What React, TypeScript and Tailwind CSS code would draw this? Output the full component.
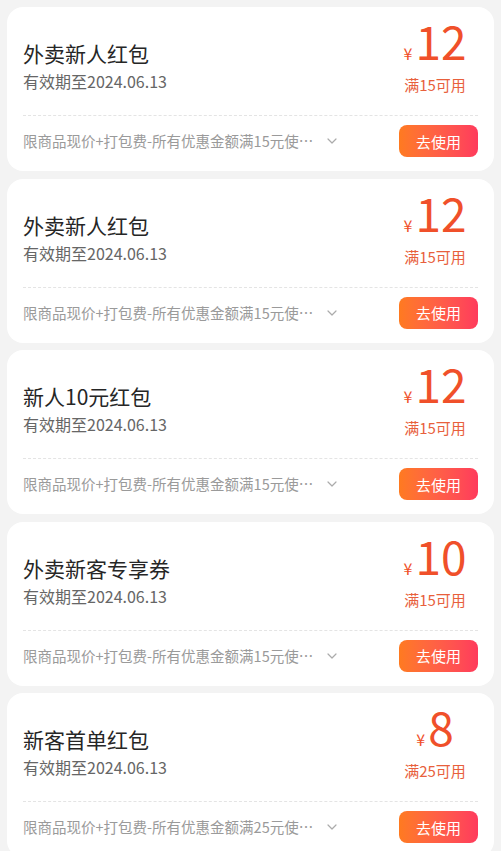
const coupons = [
  { id: 1, title: '外卖新人红包', amount: 12, min: 15 },
  { id: 2, title: '外卖新人红包', amount: 12, min: 15 },
  { id: 3, title: '新人10元红包', amount: 12, min: 15 },
  { id: 4, title: '外卖新客专享券', amount: 10, min: 15 },
  { id: 5, title: '新客首单红包', amount: 8, min: 25 },
];

function Chevron() {
  return (
    <svg width="10" height="6" viewBox="0 0 10 6" fill="none" className="shrink-0">
      <path d="M1 1l4 4 4-4" stroke="#ababab" strokeWidth="1.2" strokeLinecap="round" strokeLinejoin="round" />
    </svg>
  );
}

export default function App() {
  return (
    <div
      className="min-h-screen bg-[#f3f3f3] px-[7px] pt-[7px] pb-4 flex flex-col gap-[7.5px]"
      style={{ fontFamily: '"Noto Sans CJK SC", "Noto Sans", sans-serif' }}
    >
      {coupons.map((c) => (
        <div key={c.id} className="bg-white rounded-2xl px-4 h-[164px] flex flex-col shrink-0">
          <div className="h-[108px] flex justify-between">
            <div className="pt-[32px]">
              <div className="text-[21px] leading-7 text-[#262626]">{c.title}</div>
              <div className="mt-[3px] text-[16px] leading-[22px] text-[#666]">有效期至2024.06.13</div>
            </div>
            <div className="w-20 mr-[3px] pt-[10px] flex flex-col items-center">
              <div className="flex items-baseline text-[#f0502a]">
                <span className="text-[16px] leading-none mr-[3px]">¥</span>
                <span className="text-[46px] leading-[46px]">{c.amount}</span>
              </div>
              <div className="mt-[12px] text-[15px] leading-5 text-[#e8603c] whitespace-nowrap">满{c.min}可用</div>
            </div>
          </div>
          <div className="border-t border-dashed border-[#e4e4e4]" />
          <div className="flex-1 flex items-center justify-between pb-[5px]">
            <div className="flex items-center gap-[9px]">
              <div className="w-[295px] truncate text-[14.5px] leading-5 text-[#9a9a9a]">
                限商品现价+打包费-所有优惠金额满{c.min}元使用，每单限用一张
              </div>
              <Chevron />
            </div>
            <button className="w-[79px] h-[32px] rounded-lg bg-gradient-to-r from-[#ff7a1f] to-[#ff3a5c] text-white text-[15px] leading-none">
              去使用
            </button>
          </div>
        </div>
      ))}
    </div>
  );
}
